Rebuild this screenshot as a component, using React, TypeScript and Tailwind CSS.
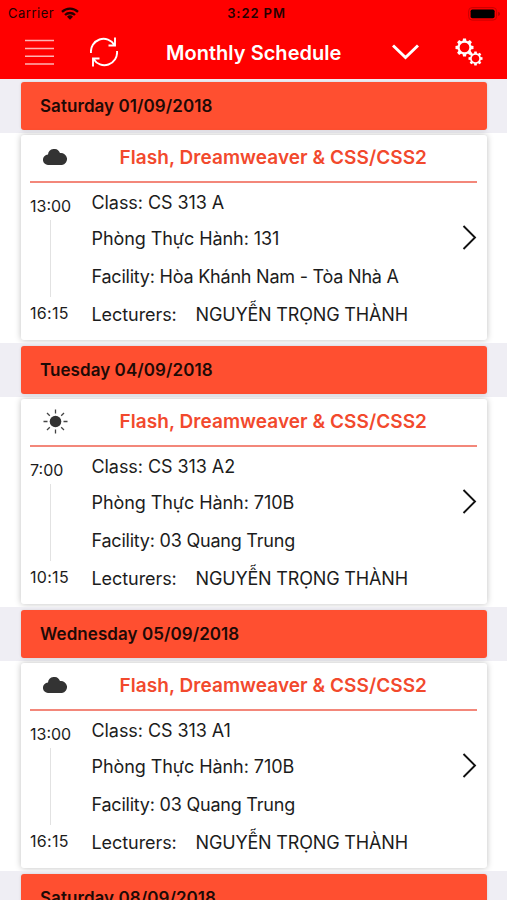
import clsx from 'clsx'

type Lesson = {
  date: string
  weather: 'cloud' | 'sun'
  title: string
  start: string
  end: string
  className: string
  room: string
  facility: string
  lecturer: string
}

const lessons: Lesson[] = [
  {
    date: 'Saturday 01/09/2018',
    weather: 'cloud',
    title: 'Flash, Dreamweaver & CSS/CSS2',
    start: '13:00',
    end: '16:15',
    className: 'CS 313 A',
    room: '131',
    facility: 'Hòa Khánh Nam - Tòa Nhà A',
    lecturer: 'NGUYỄN TRỌNG THÀNH',
  },
  {
    date: 'Tuesday 04/09/2018',
    weather: 'sun',
    title: 'Flash, Dreamweaver & CSS/CSS2',
    start: '7:00',
    end: '10:15',
    className: 'CS 313 A2',
    room: '710B',
    facility: '03 Quang Trung',
    lecturer: 'NGUYỄN TRỌNG THÀNH',
  },
  {
    date: 'Wednesday 05/09/2018',
    weather: 'cloud',
    title: 'Flash, Dreamweaver & CSS/CSS2',
    start: '13:00',
    end: '16:15',
    className: 'CS 313 A1',
    room: '710B',
    facility: '03 Quang Trung',
    lecturer: 'NGUYỄN TRỌNG THÀNH',
  },
]

function CloudIcon() {
  return (
    <svg width="25" height="16" viewBox="0 0 25 16" fill="#333">
      <path d="M5.300 16A5.200 5.200 0 0 1 5 5.600 6.200 6.200 0 0 1 17 4.100 6 6 0 1 1 19 16Z" />
    </svg>
  )
}

function SunIcon() {
  return (
    <svg width="25" height="25" viewBox="0 0 25 25" stroke="#444" strokeWidth="1.3">
      <circle cx="12.5" cy="12.5" r="5.8" fill="#333" stroke="none" />
      <path d="M12.5 .5v4M12.5 20.5v4M.5 12.5h4M20.5 12.5h4M4 4l2.800 2.800M18.200 18.200l2.800 2.800M4 21l2.800-2.800M18.200 6.800l2.800-2.800" />
    </svg>
  )
}

function RefreshIcon() {
  return (
    <svg width="28" height="30" viewBox="0 0 28 30" fill="none" stroke="#fff" strokeWidth="1.9">
      <path d="M1 16A12.700 12.700 0 0 1 24.500 8M25 .5v8h-6.500" />
      <path d="M27 14A12.700 12.700 0 0 1 3.500 22M3 29.500v-8h6.500" />
    </svg>
  )
}

// Gear centred on 0,0 with eight square teeth
function Gear({ x, y, scale }: { x: number; y: number; scale: number }) {
  return (
    <g transform={`translate(${x} ${y}) scale(${scale})`}>
      <circle r="5.9" fill="none" stroke="#fff" strokeWidth="2.1" />
      {[0, 45, 90, 135, 180, 225, 270, 315].map((angle) => (
        <path key={angle} d="M-1.500-9h3l.5 3h-4z" fill="#fff" transform={`rotate(${angle})`} />
      ))}
    </g>
  )
}

function StatusBar() {
  return (
    <div className="flex h-[27px] items-center justify-between pl-2 pr-1.5 text-[13px] text-[#260000]">
      <div className="flex w-[120px] items-center gap-[7px]">
        <span className="pt-px tracking-[0.5px]">Carrier</span>
        <svg width="18" height="13" viewBox="0 0 18 13" fill="none" stroke="#260000" strokeWidth="2.3">
          <path d="M1 4.800a11.500 11.500 0 0 1 16 0M4 8a7.200 7.200 0 0 1 10 0" />
          <path d="M9 12.800 6 9.800a4.300 4.300 0 0 1 6 0z" fill="#260000" stroke="none" />
        </svg>
      </div>
      <span className="pt-px pl-1 text-[13px] font-semibold tracking-[0.9px]">3:22 PM</span>
      <div className="flex w-[120px] justify-end">
        <svg width="33" height="14" viewBox="0 0 33 14">
          <rect x=".6" y=".6" width="28" height="12.5" rx="3.5" fill="none" stroke="#c80000" />
          <rect x="2.6" y="2.5" width="24" height="8.7" rx="1.8" fill="#000" />
          <path d="M30.300 4.800q1.600.5 1.600 2.100t-1.600 2.100z" fill="#a80000" />
        </svg>
      </div>
    </div>
  )
}

function NavBar() {
  return (
    <div className="flex h-[50px] items-center pl-[25px] pr-6 text-white">
      <svg width="29" height="27" viewBox="0 0 29 27" stroke="#ffb3b3" strokeWidth="1.6">
        <path d="M0 1.500h29M0 9.500h29M0 17.200h29M0 25h29" />
      </svg>
      <div className="ml-9">
        <RefreshIcon />
      </div>
      <h1 className="ml-12 w-[176px] whitespace-nowrap pt-px text-[20px] font-semibold tracking-[0.03px]">
        Monthly Schedule
      </h1>
      <svg className="ml-[50px]" width="27" height="16" viewBox="0 0 27 16" fill="none" stroke="#fff" strokeWidth="3">
        <path d="m1 1.500 12.500 12L26 1.500" />
      </svg>
      <svg className="ml-9" width="28" height="28" viewBox="0 0 28 28">
        <Gear x={9.5} y={9.5} scale={1} />
        <Gear x={20.5} y={20.5} scale={0.78} />
      </svg>
    </div>
  )
}

function DateHeader({ date }: { date: string }) {
  return (
    <div className="h-[54px] bg-[#efeef4] px-[20.5px] pt-[2.5px]">
      <div className="flex h-12 items-center rounded-[3px] bg-[#ff4f30] pl-[19.5px] pt-0.5 text-[17px] font-semibold tracking-[0.06px] text-[#1e0a06] shadow-[0_0_3px_rgba(0,0,0,0.12)]">
        {date}
      </div>
    </div>
  )
}

function LessonCard({ lesson }: { lesson: Lesson }) {
  return (
    <div className="h-[210px] px-[20.5px] pt-[2px]">
      <div className="h-[205px] rounded-[3px] bg-white px-[9.5px] text-[#1c1c1c] shadow-[0_0_6px_rgba(0,0,0,0.25)]">
        <div className="flex h-12 items-center border-b-2 border-[#f3877a]">
          <div className={clsx('flex w-[89.5px] pl-[12.5px]', lesson.weather === 'cloud' ? 'pb-0.5' : 'pb-px')}>
            {lesson.weather === 'cloud' ? <CloudIcon /> : <SunIcon />}
          </div>
          <h2 className="whitespace-nowrap pt-px text-[19px] font-semibold tracking-[0.06px] text-[#f2492d]">
            {lesson.title}
          </h2>
        </div>
        <div className="flex h-[157px]">
          <div className="flex w-[61.5px] flex-col text-[16px] leading-5">
            <span className="mt-[13px]">{lesson.start}</span>
            <div className="my-1 ml-5 h-[77px] w-px bg-[#e2e2e2]" />
            <span className="mt-[2px] tracking-[0.3px]">{lesson.end}</span>
          </div>
          <div className="flex flex-1 flex-col whitespace-nowrap pt-[7.5px] text-[18px] leading-6 tracking-[-0.07px]">
            <p>Class: {lesson.className}</p>
            <p className="mt-3">Phòng Thực Hành: {lesson.room}</p>
            <p className="mt-[14px] tracking-[-0.22px]">Facility: {lesson.facility}</p>
            <p className="mt-[14px] flex">
              <span className="w-[104px]">Lecturers:</span>
              <span className="tracking-[-0.17px]">{lesson.lecturer}</span>
            </p>
          </div>
          <svg className="mt-[42px]" width="15" height="25" viewBox="0 0 15 25" fill="none" stroke="#111" strokeWidth="1.9">
            <path d="m1.500 1 11.500 11.500L1.500 24" />
          </svg>
        </div>
      </div>
    </div>
  )
}

export default function App() {
  return (
    <div className="h-[900px] w-[507px] overflow-hidden bg-white font-['Inter','Noto_Sans',sans-serif]">
      <header className="h-[79px] bg-[#ff0000]">
        <StatusBar />
        <NavBar />
      </header>
      <main>
        {lessons.map((lesson) => (
          <section key={lesson.date}>
            <DateHeader date={lesson.date} />
            <LessonCard lesson={lesson} />
          </section>
        ))}
        <DateHeader date="Saturday 08/09/2018" />
      </main>
    </div>
  )
}
